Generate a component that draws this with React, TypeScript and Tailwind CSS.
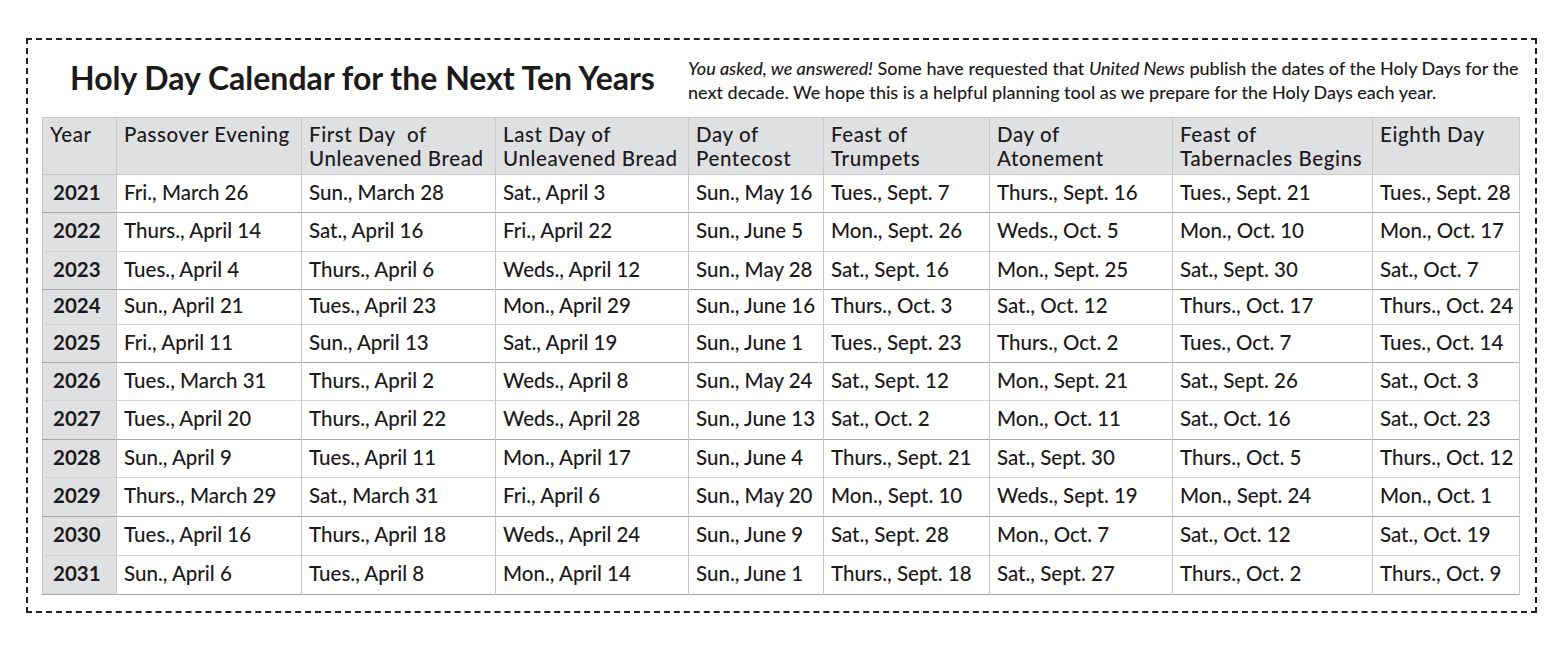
const columns = [
  { label: ["Year"], width: "w-[74px]" },
  { label: ["Passover Evening"], width: "w-[185px]" },
  { label: ["First Day  of", "Unleavened Bread"], width: "w-[194px]" },
  { label: ["Last Day of", "Unleavened Bread"], width: "w-[193px]" },
  { label: ["Day of", "Pentecost"], width: "w-[135px]" },
  { label: ["Feast of", "Trumpets"], width: "w-[166px]" },
  { label: ["Day of", "Atonement"], width: "w-[183px]" },
  { label: ["Feast of", "Tabernacles Begins"], width: "w-[200px]" },
  { label: ["Eighth Day"], width: "w-[147px]" },
];

const rows: { year: string; h: string; days: string[] }[] = [
  { year: "2021", h: "h-[38px]", days: ["Fri., March 26", "Sun., March 28", "Sat., April 3", "Sun., May 16", "Tues., Sept. 7", "Thurs., Sept. 16", "Tues., Sept. 21", "Tues., Sept. 28"] },
  { year: "2022", h: "h-[39px]", days: ["Thurs., April 14", "Sat., April 16", "Fri., April 22", "Sun., June 5", "Mon., Sept. 26", "Weds., Oct. 5", "Mon., Oct. 10", "Mon., Oct. 17"] },
  { year: "2023", h: "h-[38px]", days: ["Tues., April 4", "Thurs., April 6", "Weds., April 12", "Sun., May 28", "Sat., Sept. 16", "Mon., Sept. 25", "Sat., Sept. 30", "Sat., Oct. 7"] },
  { year: "2024", h: "h-[35px]", days: ["Sun., April 21", "Tues., April 23", "Mon., April 29", "Sun., June 16", "Thurs., Oct. 3", "Sat., Oct. 12", "Thurs., Oct. 17", "Thurs., Oct. 24"] },
  { year: "2025", h: "h-[38px]", days: ["Fri., April 11", "Sun., April 13", "Sat., April 19", "Sun., June 1", "Tues., Sept. 23", "Thurs., Oct. 2", "Tues., Oct. 7", "Tues., Oct. 14"] },
  { year: "2026", h: "h-[38px]", days: ["Tues., March 31", "Thurs., April 2", "Weds., April 8", "Sun., May 24", "Sat., Sept. 12", "Mon., Sept. 21", "Sat., Sept. 26", "Sat., Oct. 3"] },
  { year: "2027", h: "h-[39px]", days: ["Tues., April 20", "Thurs., April 22", "Weds., April 28", "Sun., June 13", "Sat., Oct. 2", "Mon., Oct. 11", "Sat., Oct. 16", "Sat., Oct. 23"] },
  { year: "2028", h: "h-[38px]", days: ["Sun., April 9", "Tues., April 11", "Mon., April 17", "Sun., June 4", "Thurs., Sept. 21", "Sat., Sept. 30", "Thurs., Oct. 5", "Thurs., Oct. 12"] },
  { year: "2029", h: "h-[39px]", days: ["Thurs., March 29", "Sat., March 31", "Fri., April 6", "Sun., May 20", "Mon., Sept. 10", "Weds., Sept. 19", "Mon., Sept. 24", "Mon., Oct. 1"] },
  { year: "2030", h: "h-[39px]", days: ["Tues., April 16", "Thurs., April 18", "Weds., April 24", "Sun., June 9", "Sat., Sept. 28", "Mon., Oct. 7", "Sat., Oct. 12", "Sat., Oct. 19"] },
  { year: "2031", h: "h-[39px]", days: ["Sun., April 6", "Tues., April 8", "Mon., April 14", "Sun., June 1", "Thurs., Sept. 18", "Sat., Sept. 27", "Thurs., Oct. 2", "Thurs., Oct. 9"] },
];

export default function App() {
  return (
    <div className="min-h-[646px] w-[1568px] bg-white pt-[38px] pl-[26px] font-['Lato',sans-serif] text-[#1c1a1b]">
      <div className="h-[575px] w-[1511px] border-2 border-dashed border-[#231f20] px-[14px]">
        <div className="flex h-[77px] items-start">
          <h1 className="ml-[28px] mt-[18px] w-[618px] whitespace-nowrap text-[32px] font-bold leading-[40px]">
            Holy Day Calendar for the Next Ten Years
          </h1>
          <p className="mt-[16px] whitespace-nowrap text-[18px] font-medium leading-[24px]">
            <em>You asked, we answered!</em> Some have requested that <em>United News</em> publish the dates of the Holy Days for the
            <br />
            next decade. We hope this is a helpful planning tool as we prepare for the Holy Days each year.
          </p>
        </div>

        <table className="w-[1477px] table-fixed border-collapse border border-[#c8c8c8] text-[20.5px] font-medium">
          <thead>
            <tr className="h-[57px] border-b border-[#c8c8c8] bg-[#dfe0e2]">
              {columns.map((c) => (
                <th
                  key={c.label.join(" ")}
                  className={`${c.width} border-r border-[#c8c8c8] px-[7px] pt-[4px] text-left align-top font-medium leading-[24px] tracking-[0.6px]`}
                >
                  {c.label.map((l) => (
                    <div key={l} className="whitespace-pre">{l}</div>
                  ))}
                </th>
              ))}
            </tr>
          </thead>
          <tbody>
            {rows.map((r, i) => (
              <tr
                key={r.year}
                className={`${r.h} border-b ${i % 2 === 0 ? "border-[#a8a8a8]" : "border-[#d3d3d3]"}`}
              >
                <td className="border-r border-[#c8c8c8] bg-[#dfe0e2] px-[10px] pb-[3px] font-bold leading-none">{r.year}</td>
                {r.days.map((d, j) => (
                  <td key={j} className="whitespace-nowrap border-r border-[#c8c8c8] px-[7px] pb-[3px] leading-none">
                    {d}
                  </td>
                ))}
              </tr>
            ))}
          </tbody>
        </table>
      </div>
    </div>
  );
}
